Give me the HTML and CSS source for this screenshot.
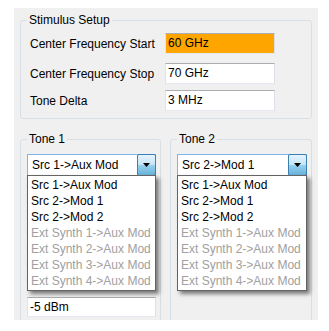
FILE: index.html
```html
<!DOCTYPE html>
<html>
<head>
<meta charset="utf-8">
<link rel="stylesheet" href="styles.css">
</head>
<body>
<div class="panel">
  <fieldset class="group setup">
    <legend>Stimulus Setup</legend>
    <div class="row row-start"><span class="lbl">Center Frequency Start</span><span class="field hl">60 GHz</span></div>
    <div class="row row-stop"><span class="lbl">Center Frequency Stop</span><span class="field">70 GHz</span></div>
    <div class="row row-delta"><span class="lbl">Tone Delta</span><span class="field">3 MHz</span></div>
  </fieldset>
  <div class="tones">
    <fieldset class="group tone tone1">
      <legend>Tone 1</legend>
      <div class="combo">
        <span class="combo-text">Src 1-&gt;Aux Mod</span>
        <span class="combo-btn"><svg width="7" height="4" viewBox="0 0 7 4"><path d="M0 0H7L3.5 4Z" fill="#000"/></svg></span>
        <ul class="dropdown">
          <li>Src 1-&gt;Aux Mod</li>
          <li>Src 2-&gt;Mod 1</li>
          <li>Src 2-&gt;Mod 2</li>
          <li class="off">Ext Synth 1-&gt;Aux Mod</li>
          <li class="off">Ext Synth 2-&gt;Aux Mod</li>
          <li class="off">Ext Synth 3-&gt;Aux Mod</li>
          <li class="off">Ext Synth 4-&gt;Aux Mod</li>
        </ul>
      </div>
      <span class="field power">-5 dBm</span>
    </fieldset>
    <fieldset class="group tone tone2">
      <legend>Tone 2</legend>
      <div class="combo">
        <span class="combo-text">Src 2-&gt;Mod 1</span>
        <span class="combo-btn"><svg width="7" height="4" viewBox="0 0 7 4"><path d="M0 0H7L3.5 4Z" fill="#000"/></svg></span>
        <ul class="dropdown">
          <li>Src 1-&gt;Aux Mod</li>
          <li>Src 2-&gt;Mod 1</li>
          <li>Src 2-&gt;Mod 2</li>
          <li class="off">Ext Synth 1-&gt;Aux Mod</li>
          <li class="off">Ext Synth 2-&gt;Aux Mod</li>
          <li class="off">Ext Synth 3-&gt;Aux Mod</li>
          <li class="off">Ext Synth 4-&gt;Aux Mod</li>
        </ul>
      </div>
    </fieldset>
  </div>
</div>
</body>
</html>
```
FILE: styles.css
```css
html, body {
  margin: 0;
  padding: 0;
  background: #ffffff;
}
body {
  font-family: "Liberation Sans", Arial, sans-serif;
  font-size: 12px;
  color: #000;
}
.panel {
  margin: 8px 0 0 14px;
  width: 304px;
  height: 312px;
  box-sizing: border-box;
  padding: 5px 6px 0 6px;
  background: #f0f0f0;
  overflow: hidden;
}
.group {
  margin: 0;
  padding: 0 4px 0 6px;
  min-width: 0;
  border: 1px solid #d5dfe5;
  border-radius: 3px;
}
.group legend {
  padding: 0 2px;
  line-height: 14px;
  height: 14px;
}
.setup {
  padding-bottom: 7px;
}
.row {
  display: flex;
  align-items: center;
  height: 21px;
}
.row-start { margin-top: 6px; }
.row-stop { margin-top: 9px; }
.row-delta { margin-top: 6px; }
.lbl {
  width: 135px;
  padding-left: 3px;
  white-space: nowrap;
}
.field {
  display: block;
  box-sizing: border-box;
  width: 110px;
  height: 21px;
  line-height: 19px;
  padding-left: 2px;
  background: #fff;
  border: 1px solid;
  border-color: #abadb3 #dbdfe6 #e3e9ef #e2e3ea;
  white-space: nowrap;
}
.field.hl {
  background: #ffa500;
}
.tones {
  display: flex;
  gap: 9px;
  margin-top: 13px;
}
.tone {
  height: 240px;
}
.tone1 {
  width: 141px;
  box-sizing: border-box;
}
.tone2 {
  flex: 1;
}
.combo {
  position: relative;
  display: flex;
  height: 22px;
  box-sizing: border-box;
  margin-top: 8px;
  border: 1px solid #7eb4ea;
  background: #fff;
}
.combo-text {
  flex: 1;
  padding-left: 4px;
  line-height: 20px;
  white-space: nowrap;
  overflow: hidden;
}
.combo-btn {
  width: 17px;
  margin: -1px -1px -1px 0;
  border: 1px solid #3c7fb1;
  border-radius: 2px;
  background: linear-gradient(#e5f4fc 0%, #c4e5f6 50%, #98d1ef 50%, #68b3db 100%);
  display: flex;
  align-items: center;
  justify-content: center;
}
.dropdown {
  position: absolute;
  top: 100%;
  left: -1px;
  right: -1px;
  margin: 0;
  padding: 1px 0;
  list-style: none;
  background: #fff;
  border: 1px solid #646464;
  box-shadow: 3px 3px 4px rgba(0, 0, 0, 0.5);
  z-index: 2;
}
.dropdown li {
  line-height: 16px;
  height: 16px;
  padding-left: 3px;
  white-space: nowrap;
}
.dropdown li.off {
  color: #a0a0a0;
}
.power {
  width: auto;
  height: 20px;
  line-height: 18px;
  margin-top: 121px;
}
```
